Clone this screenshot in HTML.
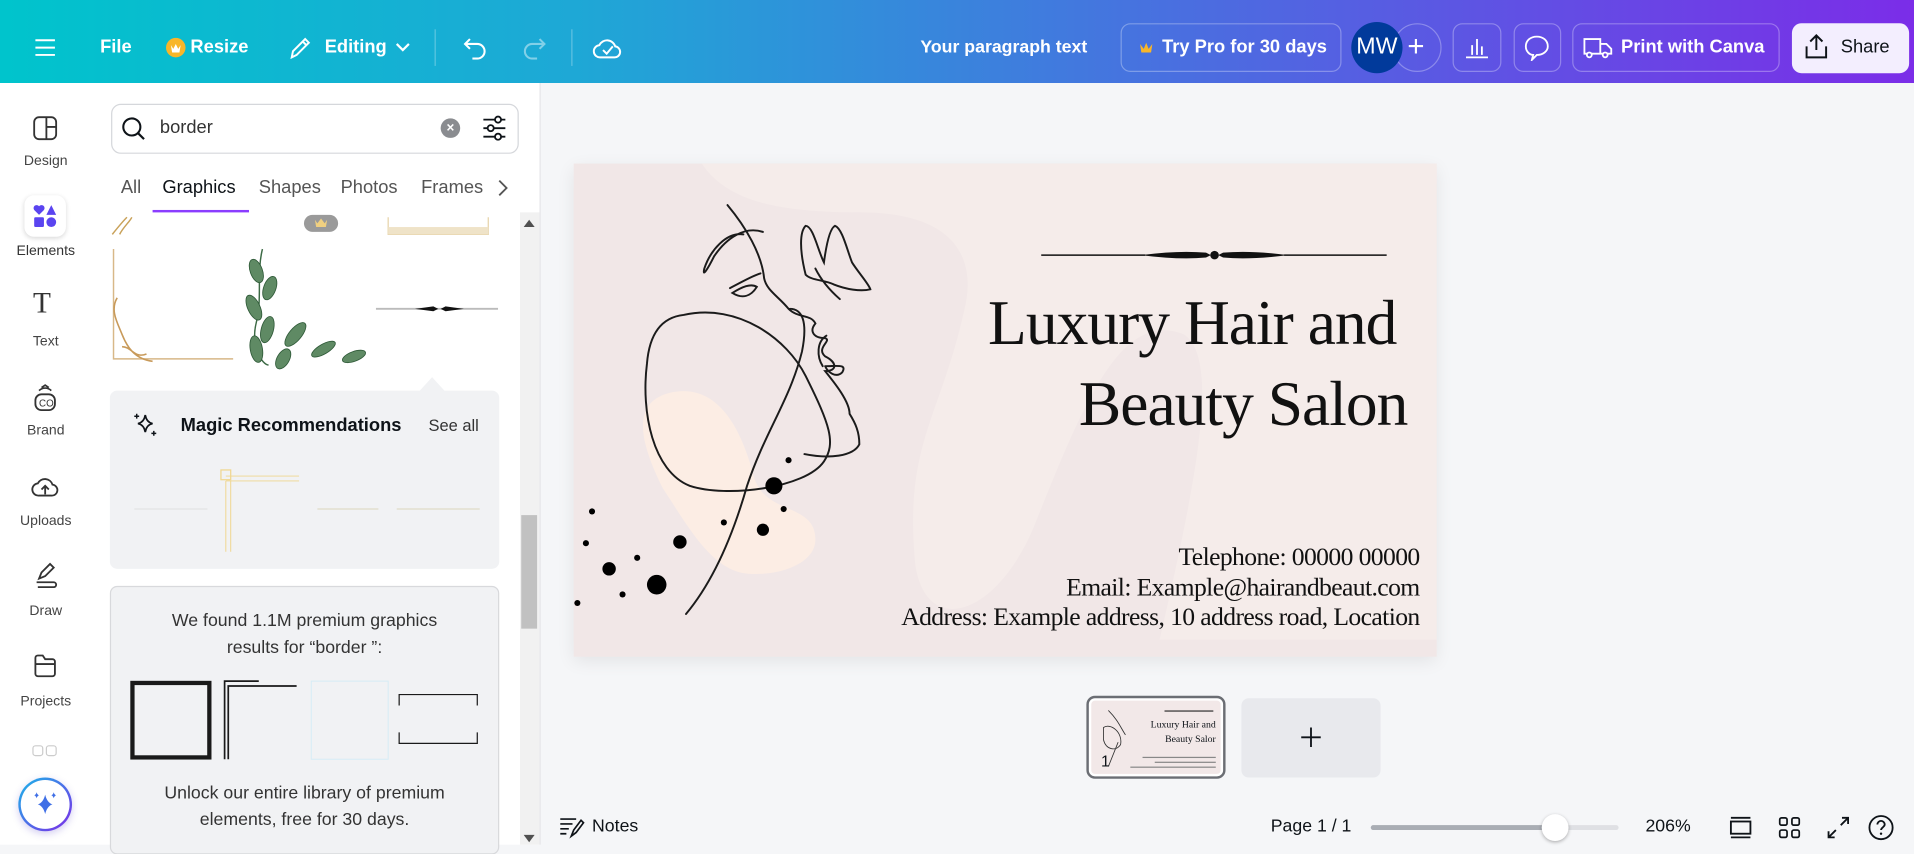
<!DOCTYPE html>
<html><head><meta charset="utf-8"><style>
*{margin:0;padding:0;box-sizing:border-box}
html,body{width:1914px;height:845px;overflow:hidden;background:#f5f6f8}
#w{position:absolute;left:0;top:0;width:1568px;height:692px;transform:scale(1.22066);transform-origin:0 0;font-family:"Liberation Sans",sans-serif;color:#0e1318}
.abs{position:absolute}
#top{left:0;top:0;width:1568px;height:68px;background:linear-gradient(90deg,#00c4cc 0%,#1ea8d6 30%,#4a6ee0 62%,#7b2de8 100%)}
#top .t{position:absolute;color:#fff;font-weight:bold;font-size:15px;top:30px}
.btn{position:absolute;top:19px;height:40px;border:1px solid rgba(255,255,255,.3);border-radius:8px}
.rail{position:absolute;left:0;width:75px;text-align:center;font-size:11.5px;color:#444}
.card{position:absolute;left:90px;width:319px;background:#f1f2f4;border-radius:6px}
.serif{font-family:"Liberation Serif",serif}
</style></head><body><div id="w">
<div id="top" class="abs">
<svg class="abs" style="left:28px;top:31px" width="18" height="16"><path d="M1 2h16M1 8h16M1 14h16" stroke="#fff" stroke-width="1.6"/></svg>
<div class="t" style="left:82px">File</div>
<div class="abs" style="left:136px;top:31px;width:16px;height:16px;border-radius:50%;background:#f8b629"></div>
<svg class="abs" style="left:139px;top:34px" width="10" height="10"><path d="M1 3l2 3 2-4 2 4 2-3-1 6H2z" fill="#fff"/></svg>
<div class="t" style="left:156px">Resize</div>
<svg class="abs" style="left:235px;top:28px" width="22" height="22"><path d="M4 19l1-5L15 4l3 3L8 17zM13 6l3 3" stroke="#fff" stroke-width="1.6" fill="none"/></svg>
<div class="t" style="left:266px">Editing</div>
<svg class="abs" style="left:323px;top:34px" width="14" height="10"><path d="M2 2l5 5 5-5" stroke="#fff" stroke-width="1.8" fill="none"/></svg>
<div class="abs" style="left:356px;top:24px;width:1px;height:30px;background:rgba(255,255,255,.3)"></div>
<svg class="abs" style="left:379px;top:29px" width="22" height="20"><path d="M6 3L2 7l4 4M2 7h10a6 6 0 010 12H8" stroke="#fff" stroke-width="1.7" fill="none"/></svg>
<svg class="abs" style="left:426px;top:29px" width="22" height="20" opacity=".45"><path d="M16 3l4 4-4 4M20 7H10a6 6 0 000 12h4" stroke="#fff" stroke-width="1.7" fill="none"/></svg>
<div class="abs" style="left:468px;top:24px;width:1px;height:30px;background:rgba(255,255,255,.3)"></div>
<svg class="abs" style="left:485px;top:28px" width="26" height="22"><path d="M7 19a5 5 0 01-1-10 7 7 0 0113 1 4.5 4.5 0 01-1 9z" stroke="#fff" stroke-width="1.6" fill="none"/><path d="M9 13l3 3 5-6" stroke="#fff" stroke-width="1.6" fill="none"/></svg>
<div class="t" style="left:754px;font-size:14.5px;top:31px">Your paragraph text</div>
<div class="btn" style="left:918px;width:181px"></div>
<svg class="abs" style="left:933px;top:33px" width="12" height="12"><path d="M1 3l3 4 2-5 2 5 3-4-1 7H2z" fill="#f8b629"/></svg>
<div class="t" style="left:952px">Try Pro for 30 days</div>
<div class="btn" style="left:1141px;width:40px;border-radius:50%"></div>
<div class="abs" style="left:1107px;top:18px;width:42px;height:42px;border-radius:50%;background:#013a9b;color:#fff;font-size:19px;text-align:center;line-height:42px">MW</div>
<div class="abs" style="left:1153px;top:25px;color:#fff;font-size:24px;font-weight:300">+</div>
<div class="btn" style="left:1190px;width:40px"></div>
<svg class="abs" style="left:1199px;top:29px" width="22" height="20"><path d="M2 18h18M7 16V8M11 16V3M15 16V9" stroke="#fff" stroke-width="1.5" fill="none"/></svg>
<div class="btn" style="left:1240px;width:39px"></div>
<svg class="abs" style="left:1248px;top:28px" width="22" height="22"><path d="M11 2C6 2 2 5 2 10c0 4 3 7 6 7l-1 4 4-4c5 0 9-3 9-7 0-5-4-8-9-8z" stroke="#fff" stroke-width="1.5" fill="none"/></svg>
<div class="btn" style="left:1288px;width:170px"></div>
<svg class="abs" style="left:1296px;top:29px" width="26" height="20"><path d="M2 3h13v12H2zM15 7h5l4 4v4h-9" stroke="#fff" stroke-width="1.5" fill="none"/><circle cx="6" cy="16" r="2" fill="#5c4fe0" stroke="#fff" stroke-width="1.5"/><circle cx="19" cy="16" r="2" fill="#6e3fe5" stroke="#fff" stroke-width="1.5"/></svg>
<div class="t" style="left:1328px">Print with Canva</div>
<div class="abs" style="left:1468px;top:19px;width:96px;height:41px;border-radius:8px;background:#f3eefe"></div>
<svg class="abs" style="left:1477px;top:27px" width="22" height="22"><path d="M11 14V2M6 7l5-5 5 5M3 11v9h16v-9" stroke="#0e1318" stroke-width="1.6" fill="none"/></svg>
<div class="abs" style="left:1508px;top:30px;font-size:15px;color:#0e1318">Share</div>
</div>
<div class="abs" style="left:0;top:68px;width:75px;height:624px;background:#fff"></div>
<svg class="abs" style="left:26px;top:94px" width="22" height="22"><rect x="2" y="2" width="18" height="18" rx="4" stroke="#333" stroke-width="1.5" fill="none"/><path d="M12 2v18M12 10h8" stroke="#333" stroke-width="1.5"/></svg>
<div class="rail" style="top:126px">Design</div>
<div class="abs" style="left:20px;top:160px;width:34px;height:34px;border-radius:8px;background:#fff;box-shadow:0 1px 4px rgba(0,0,0,.15)"></div>
<svg class="abs" style="left:27px;top:167px" width="20" height="20"><path d="M5 9L1 5a2.5 2.5 0 014-3 2.5 2.5 0 014 3z" fill="#5a44f0"/><path d="M15 1l4 8h-8z" fill="#5a44f0"/><rect x="1" y="11" width="8" height="8" rx="1" fill="#5a44f0"/><circle cx="15" cy="15" r="4" fill="#5a44f0"/></svg>
<div class="rail" style="top:200px;color:#333">Elements</div>
<div class="abs" style="left:27px;top:236px;font-size:24px;color:#333;font-family:'Liberation Serif',serif">T</div>
<div class="rail" style="top:274px">Text</div>
<svg class="abs" style="left:26px;top:314px" width="22" height="24"><path d="M6 6a7 7 0 0110 0M8 3.5l3-2 3 2" stroke="#333" stroke-width="1.4" fill="none"/><rect x="3" y="9" width="16" height="13" rx="5" stroke="#333" stroke-width="1.5" fill="none"/><text x="6" y="19" font-size="8" font-family="Liberation Sans" fill="#333">CO</text></svg>
<div class="rail" style="top:347px">Brand</div>
<svg class="abs" style="left:25px;top:387px" width="24" height="22"><path d="M7 19a5 5 0 01-1-10 6.5 6.5 0 0112 1 4.5 4.5 0 01-1 9zM12 18v-7M9 14l3-3 3 3" stroke="#333" stroke-width="1.5" fill="none"/></svg>
<div class="rail" style="top:421px">Uploads</div>
<svg class="abs" style="left:26px;top:460px" width="22" height="24"><path d="M6 14l2-5 7-7 3 3-7 7zM4 17h14a2 2 0 010 4H5" stroke="#333" stroke-width="1.5" fill="none"/></svg>
<div class="rail" style="top:495px">Draw</div>
<svg class="abs" style="left:26px;top:534px" width="22" height="22"><path d="M3 5a2 2 0 012-2h4l2 3h6a2 2 0 012 2v10a2 2 0 01-2 2H5a2 2 0 01-2-2zM3 10h16" stroke="#333" stroke-width="1.5" fill="none"/></svg>
<div class="rail" style="top:569px">Projects</div>
<svg class="abs" style="left:26px;top:610px" width="22" height="10"><rect x="1" y="1" width="8" height="8" rx="2" stroke="#ccc" fill="none"/><rect x="12" y="1" width="8" height="8" rx="2" stroke="#ccc" fill="none"/></svg>
<div class="abs" style="left:15px;top:637px;width:44px;height:44px;border-radius:50%;background:linear-gradient(135deg,#19b6e8,#7d2ae8);box-shadow:0 2px 6px rgba(80,60,200,.25)"></div>
<div class="abs" style="left:17px;top:639px;width:40px;height:40px;border-radius:50%;background:#fff"></div>
<svg class="abs" style="left:25px;top:647px" width="24" height="24"><path d="M12 4q1.5 6.5 6 8q-4.5 1.5-6 8q-1.5-6.5-6-8q4.5-1.5 6-8z" fill="#3f6fe6"/><path d="M5 2q.5 2 2 2.5q-1.5.5-2 2.5q-.5-2-2-2.5q1.5-.5 2-2.5zM19 2q.5 2 2 2.5q-1.5.5-2 2.5q-.5-2-2-2.5q1.5-.5 2-2.5z" fill="#3f6fe6"/></svg>
<div class="abs" style="left:75px;top:68px;width:368px;height:624px;background:#fff;border-right:1px solid #e4e5e8"></div>
<div class="abs" style="left:91px;top:85px;width:334px;height:41px;border:1px solid #d5d7db;border-radius:8px"></div>
<svg class="abs" style="left:98px;top:94px" width="24" height="24"><circle cx="10" cy="10" r="7" stroke="#0e1318" stroke-width="1.7" fill="none"/><path d="M15 15l5 5" stroke="#0e1318" stroke-width="1.8"/></svg>
<div class="abs" style="left:131px;top:96px;font-size:15px;color:#333">border</div>
<div class="abs" style="left:361px;top:97px;width:16px;height:16px;border-radius:50%;background:#8a8c90;color:#fff;font-size:11px;text-align:center;line-height:16px;font-weight:bold">×</div>
<svg class="abs" style="left:394px;top:94px" width="22" height="22"><path d="M2 4h18M2 11h18M2 18h18" stroke="#0e1318" stroke-width="1.5"/><circle cx="14" cy="4" r="2.5" fill="#fff" stroke="#0e1318" stroke-width="1.5"/><circle cx="8" cy="11" r="2.5" fill="#fff" stroke="#0e1318" stroke-width="1.5"/><circle cx="14" cy="18" r="2.5" fill="#fff" stroke="#0e1318" stroke-width="1.5"/></svg>
<div class="abs" style="top:145px;left:99px;font-size:15px;color:#555">All</div>
<div class="abs" style="top:145px;left:133px;font-size:15px;color:#0e1318">Graphics</div>
<div class="abs" style="top:145px;left:212px;font-size:15px;color:#555">Shapes</div>
<div class="abs" style="top:145px;left:279px;font-size:15px;color:#555">Photos</div>
<div class="abs" style="top:145px;left:345px;font-size:15px;color:#555">Frames</div>
<svg class="abs" style="left:407px;top:146px" width="10" height="16"><path d="M2 2l6 6-6 6" stroke="#555" stroke-width="1.5" fill="none"/></svg>
<div class="abs" style="left:125px;top:172px;width:79px;height:2px;background:#8b3dff"></div>
<svg class="abs" style="left:90px;top:174px" width="330" height="130">
<path d="M2 18c4-5 8-10 12-14M8 18c3-6 8-10 10-14" stroke="#c9a25a" stroke-width="1.2" fill="none"/>
<rect x="159" y="2" width="28" height="14" rx="7" fill="#9a9a9a"/><path d="M168 6l2 3 3-4 3 4 2-3-1 6h-8z" fill="#f0d080"/>
<path d="M228 4v14h82V4" stroke="#e6d3a8" stroke-width="1" fill="none"/><rect x="228" y="12" width="82" height="6" fill="#efe3c8"/>
<path d="M3 30v90h98" stroke="#d8b888" stroke-width="1.2" fill="none"/>
<path d="M6 70c-6 10 0 20 4 30s10 20 25 22M10 110c8 0 10 10 20 6" stroke="#c89a5a" stroke-width="1.3" fill="none"/>
<path d="M125 30c-5 20 0 40 -5 60s5 35 10 35" stroke="#3c6a45" stroke-width="1.2" fill="none"/>
<g fill="#5f8a64" stroke="#2f5a38" stroke-width=".7"><ellipse cx="120" cy="48" rx="5" ry="10" transform="rotate(-20 120 48)"/><ellipse cx="131" cy="62" rx="5" ry="10" transform="rotate(20 131 62)"/><ellipse cx="118" cy="78" rx="5" ry="11" transform="rotate(-25 118 78)"/><ellipse cx="129" cy="96" rx="5" ry="11" transform="rotate(15 129 96)"/><ellipse cx="152" cy="100" rx="5" ry="12" transform="rotate(40 152 100)"/><ellipse cx="175" cy="112" rx="4" ry="11" transform="rotate(60 175 112)"/><ellipse cx="200" cy="118" rx="4" ry="10" transform="rotate(70 200 118)"/><ellipse cx="120" cy="112" rx="5" ry="11" transform="rotate(-10 120 112)"/><ellipse cx="142" cy="120" rx="5" ry="9" transform="rotate(30 142 120)"/></g>
<path d="M218 79h100" stroke="#bbb" stroke-width="1.5"/><path d="M250 79l15-2 4 2-4 2zM290 79l-15-2-4 2 4 2z" fill="#111"/>
</svg>
<svg class="abs" style="left:343px;top:307px" width="22" height="14"><path d="M0 14L11 2l11 12z" fill="#f1f2f4"/></svg>
<div class="card" style="top:320px;height:146px"></div>
<svg class="abs" style="left:108px;top:337px" width="22" height="22"><path d="M11 3q1 6 6 7q-5 1-6 7q-1-6-6-7q5-1 6-7z" stroke="#0e1318" stroke-width="1.4" fill="none"/><path d="M4 2v4M2 4h4M18 16v4M16 18h4" stroke="#0e1318" stroke-width="1.2"/></svg>
<div class="abs" style="left:148px;top:340px;font-size:15px;font-weight:bold">Magic Recommendations</div>
<div class="abs" style="left:351px;top:341px;font-size:13.5px;color:#333">See all</div>
<svg class="abs" style="left:100px;top:380px" width="300" height="75"><path d="M10 37h60" stroke="#e4e4e4"/><rect x="81" y="5" width="8" height="8" fill="none" stroke="#f0d68e"/><path d="M85 10h60M85 14h60M85 14v58M89 14v58" stroke="#f0d68e" stroke-width=".8"/><path d="M160 37h50M225 37h68" stroke="#e0dcc8"/></svg>
<div class="card" style="top:480px;height:220px;border:1px solid #d8d9dc"></div>
<div class="abs" style="left:90px;top:498px;width:319px;text-align:center;font-size:14.5px;line-height:22px;color:#333">We found 1.1M premium graphics<br>results for “border ”:</div>
<svg class="abs" style="left:105px;top:556px" width="290" height="68">
<rect x="3.5" y="3.5" width="63" height="61" fill="none" stroke="#1a1a1a" stroke-width="3.5"/>
<path d="M79 66V2h28M82 66V6h56" stroke="#1a1a1a" stroke-width="1.4" fill="none"/>
<rect x="150" y="2" width="63" height="64" fill="none" stroke="#d6ecf6" stroke-width=".8"/>
<path d="M222 22V13h64v9M222 44v9h64v-9" stroke="#1a1a1a" stroke-width="1" fill="none"/>
</svg>
<div class="abs" style="left:90px;top:639px;width:319px;text-align:center;font-size:14.5px;line-height:22px;color:#333">Unlock our entire library of premium<br>elements, free for 30 days.</div>
<div class="abs" style="left:426px;top:174px;width:16px;height:518px;background:#f1f1f1"></div>
<div class="abs" style="left:427px;top:422px;width:13px;height:93px;background:#c1c1c1"></div>
<svg class="abs" style="left:429px;top:179px" width="9" height="8"><path d="M0 7l4.5-6 4.5 6z" fill="#505050"/></svg>
<svg class="abs" style="left:429px;top:683px" width="9" height="8"><path d="M0 1l4.5 6 4.5-6z" fill="#505050"/></svg>
<div class="abs" style="left:470px;top:134px;width:707px;height:404px;background:#f1e7e7;box-shadow:0 4px 14px rgba(0,0,0,.08);overflow:hidden">
<svg width="707" height="404" viewBox="470 134 707 404" style="position:absolute;left:0;top:0">
<path d="M575 134c20 30 60 40 130 40c80 0 95 40 85 80c-20 90 -50 110 -40 210c10 60 70 40 100 -40c40 -100 70 -170 120 -150c30 20 10 120 -20 250h227V134z" fill="#f5ecea"/>
<path d="M548 322c40 -10 60 30 70 70c10 30 50 20 50 50c0 20 -30 30 -55 28c-30 -2 -50 -40 -70 -70c-20 -40 -25 -70 5 -78z" fill="#fcede4"/>
<g stroke="#1b1b1b" stroke-width="1.6" fill="none" stroke-linecap="round">
<path d="M562 503c25 -30 40 -70 50 -105c15 -45 35 -70 45 -110c5 -25 0 -35 -10 -35"/>
<path d="M560 258c45 -10 85 20 100 50c20 40 25 55 15 70c-15 22 -80 30 -110 20c-30 -12 -40 -60 -35 -100c2 -25 12 -38 30 -40z"/>
<path d="M596 168c15 18 28 40 30 60c2 10 12 15 20 25c8 8 18 4 22 12c-5 6 -2 12 8 12c6 2 -8 8 0 15c10 5 10 12 0 12c8 10 20 25 20 35c5 8 8 15 8 25c-5 10 -25 12 -45 8"/>
<path d="M625 190c-15 -5 -30 5 -40 20c-5 10 -10 18 -8 10c5 -15 18 -30 32 -28M600 240c8 -5 15 -8 20 -5c-5 8 -12 10 -20 5zM598 236c10 -5 18 -10 25 -12"/>
<path d="M660 225c-5 -20 -5 -35 0 -40c6 0 10 20 15 30c2 -15 5 -28 9 -30c6 2 10 20 14 30c5 8 14 18 15 22c-8 2 -20 0 -30 -4c-8 -4 -18 -3 -23 -8zM668 220c5 10 12 18 20 25"/>
<path d="M674 300c-5 -8 -5 -20 3 -25M676 300c10 0 18 -2 14 5c-5 5 -12 0 -14 -5"/>
</g>
<g fill="#000"><circle cx="634" cy="398" r="7"/><circle cx="646" cy="377" r="2.5"/><circle cx="625" cy="434" r="5"/><circle cx="642" cy="417" r="2.5"/><circle cx="593" cy="428" r="2.5"/><circle cx="557" cy="444" r="5.5"/><circle cx="485" cy="419" r="2.5"/><circle cx="480" cy="445" r="2.5"/><circle cx="499" cy="466" r="5.5"/><circle cx="538" cy="479" r="8"/><circle cx="522" cy="457" r="2.5"/><circle cx="510" cy="487" r="2.5"/><circle cx="473" cy="494" r="2.5"/></g>
<path d="M853 209h85M1052 209h84" stroke="#111" stroke-width="1.3"/>
<path d="M935 209q30 -4 53 -2l4 2l-4 2q-23 2 -53 -2zM1055 209q-30 -4 -53 -2l-4 2l4 2q23 2 53 -2z" fill="#111"/><circle cx="995" cy="209" r="3.5" fill="#111"/>
</svg>
<div class="serif abs" style="right:33px;top:102px;font-size:52px;color:#111;white-space:nowrap;letter-spacing:-0.8px">Luxury Hair and</div>
<div class="serif abs" style="right:24px;top:168px;font-size:52px;color:#111;white-space:nowrap;letter-spacing:-0.8px">Beauty Salon</div>
<div class="serif abs" style="right:14px;top:310px;font-size:21px;line-height:24.5px;text-align:right;color:#111;white-space:nowrap;letter-spacing:-0.5px">Telephone: 00000 00000<br>Email: Example@hairandbeaut.com<br>Address: Example address, 10 address road, Location</div>
</div>
<div class="abs" style="left:890px;top:570px;width:114px;height:68px;border:2px solid #6b6e74;border-radius:7px;background:#fff;padding:2px">
<div style="width:106px;height:60px;background:#f2e8e8;border-radius:3px;position:relative;overflow:hidden">
<div class="serif abs" style="right:4px;top:14px;font-size:8px;text-align:right;line-height:12px;white-space:nowrap">Luxury Hair and<br>Beauty Salor</div>
<div class="abs" style="left:60px;top:8px;width:40px;height:1px;background:#333"></div>
<div class="abs" style="right:4px;top:46px;width:60px;height:1px;background:#888"></div>
<div class="abs" style="right:4px;top:50px;width:50px;height:1px;background:#888"></div>
<div class="abs" style="right:4px;top:54px;width:70px;height:1px;background:#888"></div>
<svg class="abs" style="left:6px;top:4px" width="30" height="50"><path d="M8 4c8 8 10 14 14 20M4 18c6 -4 16 4 14 14c-4 6 -12 4 -14 -4zM16 30l-8 20" stroke="#333" stroke-width=".7" fill="none"/></svg>
<div class="abs" style="left:8px;top:42px;font-size:13px">1</div>
</div></div>
<div class="abs" style="left:1017px;top:572px;width:114px;height:65px;background:#e8e9ed;border-radius:6px"></div>
<svg class="abs" style="left:1065px;top:595px" width="18" height="18"><path d="M9 1v16M1 9h16" stroke="#0e1318" stroke-width="1.5"/></svg>
<svg class="abs" style="left:458px;top:669px" width="22" height="18"><path d="M1 2h13M1 6h10M1 10h7M1 14h5M10 16l2-5 6-8 2 2-6 8z" stroke="#0e1318" stroke-width="1.4" fill="none"/></svg>
<div class="abs" style="left:485px;top:669px;font-size:14.5px">Notes</div>
<div class="abs" style="left:1041px;top:669px;font-size:14.5px">Page 1 / 1</div>
<div class="abs" style="left:1123px;top:676px;width:203px;height:4px;border-radius:2px;background:#dfe0e4"></div>
<div class="abs" style="left:1123px;top:676px;width:150px;height:4px;border-radius:2px;background:#a9adb4"></div>
<div class="abs" style="left:1263px;top:667px;width:22px;height:22px;border-radius:50%;background:#fff;box-shadow:0 1px 3px rgba(0,0,0,.3)"></div>
<div class="abs" style="left:1348px;top:669px;font-size:14.5px">206%</div>
<svg class="abs" style="left:1416px;top:668px" width="20" height="20"><path d="M2 2h16M2 18h16" stroke="#0e1318" stroke-width="1.5"/><rect x="2" y="5" width="16" height="10" fill="none" stroke="#0e1318" stroke-width="1.5"/></svg>
<svg class="abs" style="left:1456px;top:668px" width="20" height="20"><rect x="2" y="2" width="6" height="6" rx="1.5" fill="none" stroke="#0e1318" stroke-width="1.4"/><rect x="12" y="2" width="6" height="6" rx="1.5" fill="none" stroke="#0e1318" stroke-width="1.4"/><rect x="2" y="12" width="6" height="6" rx="1.5" fill="none" stroke="#0e1318" stroke-width="1.4"/><rect x="12" y="12" width="6" height="6" rx="1.5" fill="none" stroke="#0e1318" stroke-width="1.4"/></svg>
<svg class="abs" style="left:1496px;top:668px" width="20" height="20"><path d="M12 8l6-6M13 2h5v5M8 12l-6 6M2 13v5h5" stroke="#0e1318" stroke-width="1.5" fill="none"/></svg>
<svg class="abs" style="left:1530px;top:667px" width="22" height="22"><circle cx="11" cy="11" r="9.5" fill="none" stroke="#0e1318" stroke-width="1.5"/><path d="M8 8.5a3 3 0 116 0c0 2-3 2.5-3 4.5" stroke="#0e1318" stroke-width="1.5" fill="none"/><circle cx="11" cy="16" r="1" fill="#0e1318"/></svg>
</div></body></html>
